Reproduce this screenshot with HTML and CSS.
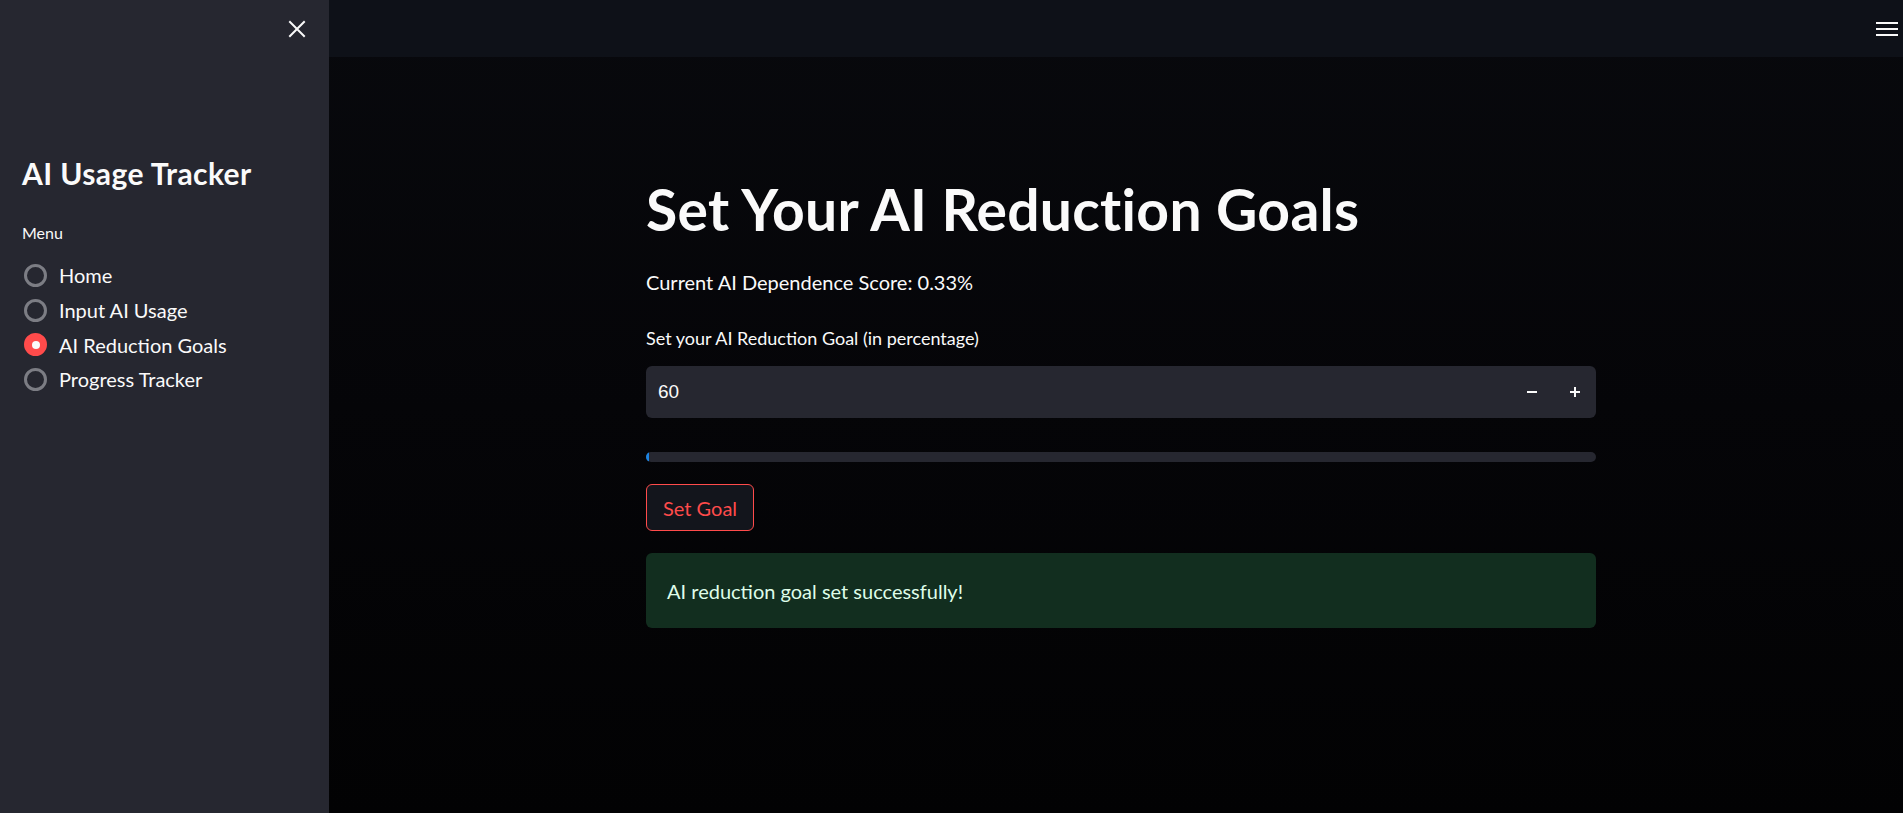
FILE: index.html
```html
<!DOCTYPE html>
<html lang="en">
<head>
<meta charset="utf-8">
<title>AI Usage Tracker</title>
<link rel="stylesheet" href="styles.css">
</head>
<body>
<div class="app">
  <aside class="sidebar">
    <div class="sidebar-top">
      <button class="close-btn" aria-label="Close sidebar">
        <svg width="18" height="18" viewBox="0 0 18 18"><path d="M2 2 L16 16 M16 2 L2 16" stroke="#fafafa" stroke-width="2" stroke-linecap="square"/></svg>
      </button>
    </div>
    <h2 class="side-title">AI Usage Tracker</h2>
    <div class="menu-label">Menu</div>
    <ul class="radio-list">
      <li class="radio"><span class="dot"></span><span>Home</span></li>
      <li class="radio"><span class="dot"></span><span>Input AI Usage</span></li>
      <li class="radio checked"><span class="dot"></span><span>AI Reduction Goals</span></li>
      <li class="radio"><span class="dot"></span><span>Progress Tracker</span></li>
    </ul>
  </aside>
  <div class="main">
    <header class="topbar">
      <button class="menu-btn" aria-label="Menu">
        <svg width="22" height="16" viewBox="0 0 22 16"><path d="M0 2 H22 M0 8 H22 M0 14 H22" stroke="#fafafa" stroke-width="2.2"/></svg>
      </button>
    </header>
    <section class="content">
      <div class="block">
        <h1 class="title">Set Your AI Reduction Goals</h1>
        <p class="score">Current AI Dependence Score: 0.33%</p>
        <label class="field-label">Set your AI Reduction Goal (in percentage)</label>
        <div class="number-input">
          <span class="value">60</span>
          <span class="step minus">
            <svg width="12" height="12" viewBox="0 0 12 12"><path d="M1 6 H11" stroke="#fafafa" stroke-width="2"/></svg>
          </span>
          <span class="step plus">
            <svg width="12" height="12" viewBox="0 0 12 12"><path d="M1 6 H11 M6 1 V11" stroke="#fafafa" stroke-width="2"/></svg>
          </span>
        </div>
        <div class="progress"><div class="progress-fill" style="width:0.33%"></div></div>
        <button class="goal-btn">Set Goal</button>
        <div class="success">AI reduction goal set successfully!</div>
      </div>
    </section>
  </div>
</div>
</body>
</html>
```
FILE: styles.css
```css
* { box-sizing: border-box; }
html, body {
  margin: 0;
  padding: 0;
  height: 100%;
  background: #050508;
  font-family: "Lato", "Noto Sans", sans-serif;
  color: #fafafa;
}
.app {
  display: flex;
  height: 813px;
  overflow: hidden;
}
.sidebar {
  width: 329px;
  flex: 0 0 329px;
  background: #262730;
  padding: 0 22px;
}
.sidebar-top {
  height: 57px;
  display: flex;
  justify-content: flex-end;
  align-items: center;
  padding-right: 1px;
}
.close-btn, .menu-btn {
  background: none;
  border: none;
  padding: 0;
  display: flex;
  cursor: pointer;
}
.side-title {
  margin: 98px 0 0 0;
  font-size: 30px;
  font-weight: 700;
  line-height: 36px;
  letter-spacing: 0.4px;
}
.menu-label {
  margin-top: 32px;
  font-size: 16px;
  line-height: 20px;
}
.radio-list {
  list-style: none;
  margin: 15px 0 0 0;
  padding: 0;
}
.radio {
  display: flex;
  align-items: center;
  height: 34.7px;
  font-size: 20px;
  gap: 12px;
}
.dot {
  width: 23px;
  height: 23px;
  border-radius: 50%;
  border: 3px solid #7c7d84;
  margin-left: 2px;
  display: flex;
  align-items: center;
  justify-content: center;
}
.radio.checked .dot {
  background: #ff4b4b;
  border-color: #ff4b4b;
}
.radio.checked .dot::after {
  content: "";
  width: 8px;
  height: 8px;
  border-radius: 50%;
  background: #fafafa;
}
.main {
  flex: 1;
  display: flex;
  flex-direction: column;
  background: linear-gradient(180deg, #08090d 0%, #050508 50%, #020203 100%);
}
.topbar {
  height: 57px;
  background: #0e1118;
  display: flex;
  justify-content: flex-end;
  align-items: center;
  padding-right: 5px;
}
.content {
  flex: 1;
  padding-left: 317px;
}
.block {
  width: 950px;
}
.title {
  margin: 116px 0 0 0;
  font-size: 57px;
  font-weight: 700;
  line-height: 72px;
  letter-spacing: 0.3px;
}
.score {
  margin: 23px 0 0 0;
  font-size: 20px;
  line-height: 28px;
}
.field-label {
  display: block;
  margin-top: 30px;
  font-size: 18px;
  line-height: 24px;
}
.number-input {
  margin-top: 16px;
  height: 52px;
  background: #262730;
  border-radius: 6px;
  display: flex;
  align-items: center;
  padding-left: 12px;
}
.value {
  flex: 1;
  font-family: "Liberation Sans", Arial, sans-serif;
  font-size: 19px;
}
.step {
  width: 43px;
  height: 52px;
  display: flex;
  align-items: center;
  justify-content: center;
}
.progress {
  margin-top: 34px;
  height: 10px;
  border-radius: 6px;
  background: #262730;
  overflow: hidden;
}
.progress-fill {
  height: 100%;
  background: #1c83e1;
}
.goal-btn {
  display: block;
  margin-top: 22px;
  height: 47px;
  padding: 0 16px;
  background: #13151c;
  border: 1px solid #ff4b4b;
  border-radius: 6px;
  color: #ff4b4b;
  font-family: "Lato", "Noto Sans", sans-serif;
  font-size: 20px;
}
.success {
  margin-top: 22px;
  height: 75px;
  border-radius: 6px;
  background: #122e1f;
  color: #dffde9;
  font-size: 20px;
  display: flex;
  align-items: center;
  padding-left: 21px;
}
```
